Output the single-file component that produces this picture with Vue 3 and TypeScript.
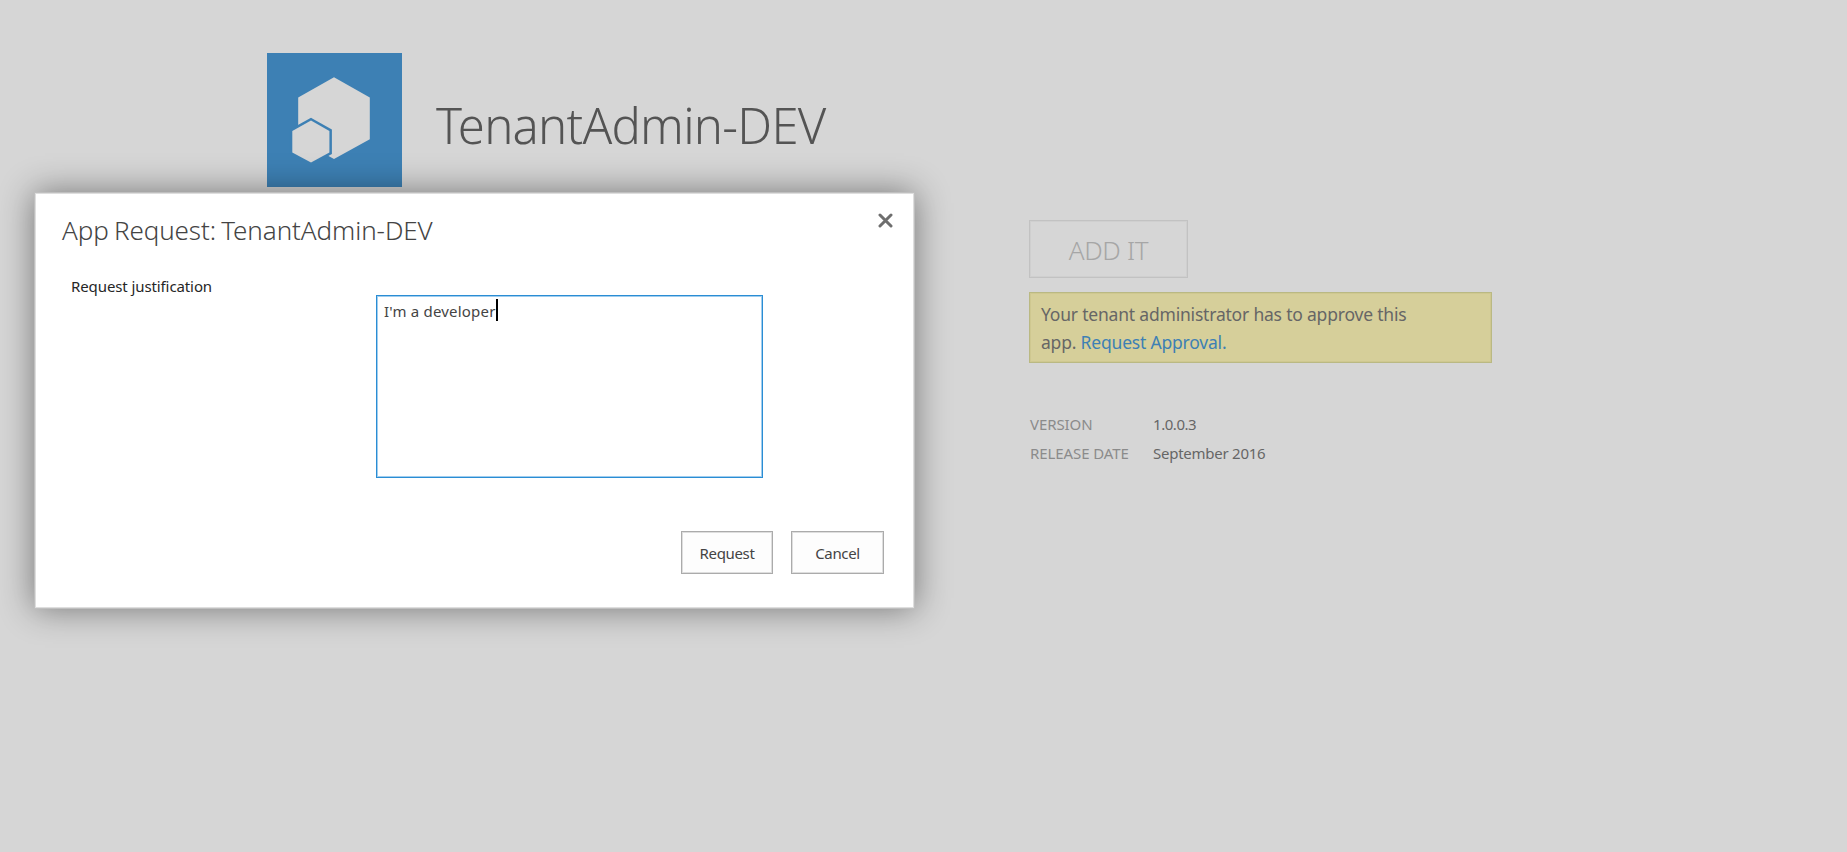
<script setup lang="ts">
import { ref } from 'vue'

interface Fact {
  label: string
  value: string
  tight: boolean
}

const appName = 'TenantAdmin-DEV'
const justification = ref("I'm a developer")
const facts: Fact[] = [
  { label: 'VERSION', value: '1.0.0.3', tight: true },
  { label: 'RELEASE DATE', value: 'September 2016', tight: false },
]
</script>

<template>
  <div class="page">
    <main class="details">
      <header class="app-head">
        <svg class="logo" viewBox="0 0 135 134" width="135" height="134">
          <rect width="135" height="134" fill="#3d80b4" />
          <path d="M67 24.3 102.8 44.6V86.2L67 106 61.5 103 58 90 31.2 76V44.6Z" fill="#d6d6d6" />
          <path
            class="small-hex"
            d="M44 67.6 62.4 78V99.4L44 109.4 25.3 99.4V78Z"
            fill="#d6d6d6"
            stroke="#3d80b4"
            stroke-width="5"
          />
        </svg>
        <h1 class="app-title">{{ appName }}</h1>
      </header>
    </main>
    <aside class="side">
      <button class="add" disabled>ADD IT</button>
      <p class="notice">
        Your tenant administrator has to approve this<br />
        app. <a>Request Approval.</a>
      </p>
      <dl class="facts">
        <template v-for="f in facts" :key="f.label">
          <dt>{{ f.label }}</dt>
          <dd :class="{ tight: f.tight }">{{ f.value }}</dd>
        </template>
      </dl>
    </aside>

    <section class="dialog" role="dialog">
      <div class="dialog-head">
        <h2>App Request: {{ appName }}</h2>
        <svg class="close" viewBox="0 0 15 15" width="15" height="15">
          <path d="M2 2 13 13M13 2 2 13" stroke="#6e6e6e" stroke-width="3" stroke-linecap="round" />
        </svg>
      </div>
      <div class="form">
        <label>Request justification</label>
        <div class="field"><span>{{ justification }}</span><i class="caret"></i></div>
      </div>
      <div class="actions">
        <button class="request">Request</button>
        <button class="cancel">Cancel</button>
      </div>
    </section>
  </div>
</template>

<style>
html,
body {
  background: #d6d6d6;
}
</style>

<style scoped>
.page,
.page * {
  box-sizing: border-box;
  margin: 0;
}
.page {
  position: relative;
  display: grid;
  grid-template-columns: 762px 463px;
  height: 852px;
  overflow: hidden;
  padding: 53px 0 0 267px;
  background: #d6d6d6;
  color: #666;
  font-family: "Noto Sans", "Open Sans", sans-serif;
  font-size: 15px;
}
.app-head {
  display: flex;
  align-items: flex-start;
}
.logo {
  display: block;
}
.small-hex {
  paint-order: stroke;
}
.app-head .app-title {
  margin: 42px 0 0 34px;
  font-size: 49px;
  font-weight: 300;
  line-height: 60px;
  letter-spacing: -0.75px;
  color: #545454;
}
.side {
  padding-top: 167px;
}
button {
  display: block;
  padding: 0;
  font-family: inherit;
}
.add {
  width: 159px;
  height: 58px;
  padding-top: 1px;
  border: 1px solid #c2c2c2;
  box-shadow: inset 0 0 0 1px #cfcfcf;
  background: #d6d6d6;
  color: #a6a6a6;
  font-size: 26px;
  font-weight: 300;
  letter-spacing: -0.3px;
}
.side .notice {
  height: 71px;
  margin-top: 14px;
  padding: 7px 0 0 11px;
  border: 1px solid #bab983;
  box-shadow: inset 0 0 0 1px #cfc890;
  background: #d6cf9a;
  font-size: 17.5px;
  line-height: 28px;
  letter-spacing: -0.2px;
}
.notice a {
  color: #3d80b4;
}
.side .facts {
  display: grid;
  grid-template-columns: 123px auto;
  margin-top: 47px;
  padding-left: 1px;
  line-height: 29px;
}
dt {
  color: #8b8b8b;
  letter-spacing: -0.08px;
}
dd {
  letter-spacing: -0.25px;
}
.tight {
  letter-spacing: -0.45px;
}
.dialog {
  position: absolute;
  left: 34px;
  top: 192px;
  width: 881px;
  height: 417px;
  padding: 19px 30px 0 27px;
  border: 1px solid #bfbfbf;
  box-shadow: inset 0 0 0 1px #dedede, 0 0 32px rgba(0, 0, 0, 0.45);
  background: #fff;
}
.dialog-head {
  display: flex;
  justify-content: space-between;
  height: 64px;
}
h2 {
  font-size: 26px;
  font-weight: 300;
  line-height: 36px;
  letter-spacing: -0.08px;
  word-spacing: -1.5px;
  color: #444;
}
.dialog-head .close {
  margin: 1px -9px 0 0;
}
.form {
  display: flex;
}
label {
  width: 314px;
  padding-left: 9px;
  line-height: 20px;
  letter-spacing: -0.1px;
  color: #262626;
}
.form .field {
  display: flex;
  width: 387px;
  height: 183px;
  margin-top: 19px;
  padding: 3px 0 0 7px;
  border: 1px solid #2a8dd4;
  box-shadow: inset 0 0 0 1px #a0cdee;
  line-height: 24px;
  letter-spacing: 0.2px;
  color: #444;
}
.caret {
  width: 2px;
  height: 22px;
  background: #000;
}
.dialog .actions {
  display: flex;
  justify-content: flex-end;
  gap: 18px;
  margin-top: 53px;
}
.actions button {
  height: 43px;
  border: 1px solid #ababab;
  box-shadow: inset 0 0 0 1px #dedede;
  background: #fdfdfd;
  color: #444;
  font-size: 15px;
  letter-spacing: -0.35px;
}
.actions .request {
  width: 92px;
}
.actions .cancel {
  width: 93px;
}
</style>
